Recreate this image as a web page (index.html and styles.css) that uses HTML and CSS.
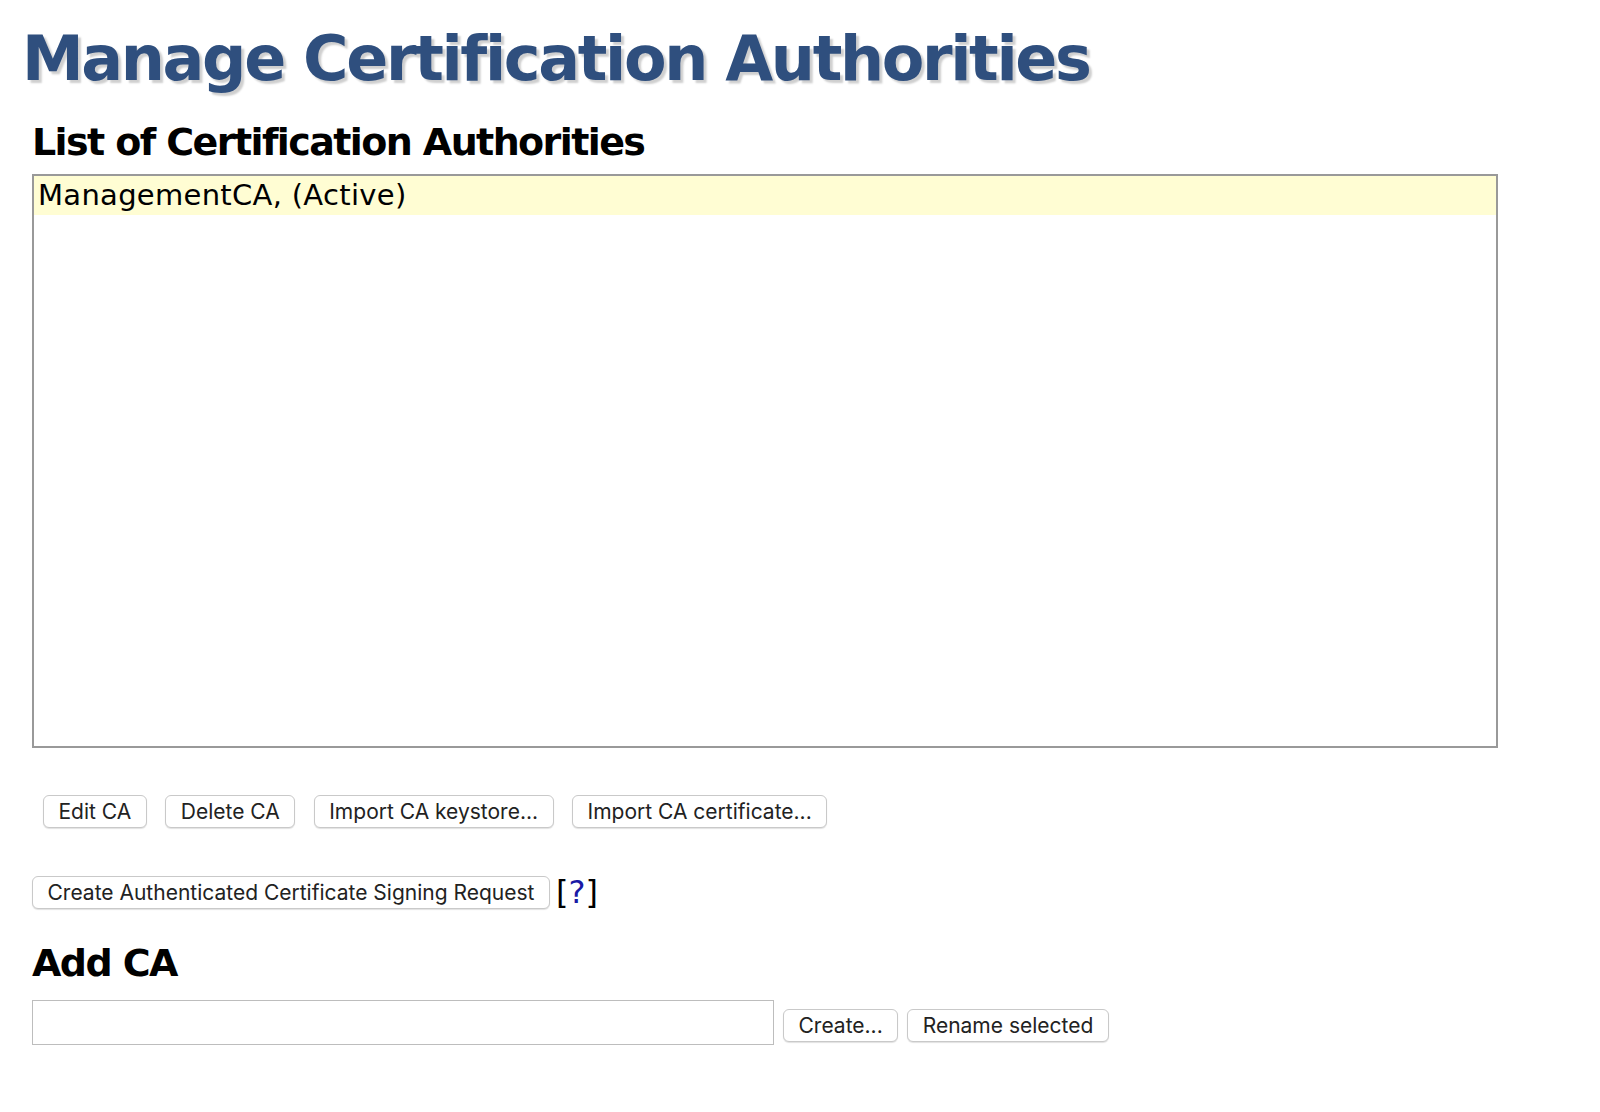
FILE: index.html
```html
<!DOCTYPE html>
<html>
<head>
<meta charset="utf-8">
<title>Manage Certification Authorities</title>
<link rel="stylesheet" href="styles.css">
</head>
<body>
<h1 class="title">Manage Certification Authorities</h1>
<div class="content">
  <h2 class="section">List of Certification Authorities</h2>
  <div class="listbox">
    <div class="option selected">ManagementCA, (Active)</div>
  </div>
  <div class="btn-row">
    <button class="btn">Edit CA</button>
    <button class="btn">Delete CA</button>
    <button class="btn">Import CA keystore...</button>
    <button class="btn">Import CA certificate...</button>
  </div>
  <div class="csr-row">
    <button class="btn">Create Authenticated Certificate Signing Request</button>
    <span class="help">[<a class="help-link">?</a>]</span>
  </div>
  <h2 class="section add">Add CA</h2>
  <div class="add-row">
    <input class="ca-name" type="text">
    <button class="btn">Create...</button>
    <button class="btn">Rename selected</button>
  </div>
</div>
</body>
</html>
```

FILE: styles.css
```css
html, body {
  margin: 0;
  padding: 0;
  background: #ffffff;
}
body {
  font-family: "DejaVu Sans", Verdana, sans-serif;
  color: #000;
}
.title {
  margin: 0;
  padding: 28px 0 0 22px;
  font-size: 62px;
  line-height: 1;
  font-weight: bold;
  letter-spacing: -2.35px;
  color: #2f4f7e;
  text-shadow: 3px 3px 2px #cfcfcf;
}
.content {
  padding-left: 32px;
}
.section {
  margin: 33px 0 0 0;
  font-size: 38px;
  line-height: 1;
  font-weight: bold;
  letter-spacing: -1.6px;
}
.listbox {
  margin-top: 13px;
  width: 1462px;
  height: 570px;
  border: 2px solid #999999;
  background: #fff;
}
.option {
  font-size: 29px;
  line-height: 39px;
  letter-spacing: 0.3px;
  padding-left: 4px;
}
.option.selected {
  background: #fffdd3;
}
.btn-row {
  margin-top: 47px;
  padding-left: 11px;
  display: flex;
  gap: 18.5px;
}
.btn {
  font-family: Inter, "Liberation Sans", sans-serif;
  font-size: 21px;
  height: 33px;
  padding: 0 14.5px;
  background: #fff;
  color: #222;
  border: 1px solid #c9c9c9;
  border-radius: 6px;
  box-shadow: 0 1px 1px rgba(0,0,0,0.12);
}
.csr-row {
  margin-top: 48px;
  height: 33px;
  display: flex;
  align-items: center;
  gap: 6px;
}
.help {
  font-size: 32px;
  line-height: 33px;
  color: #000;
}
.help-link {
  color: #1a1aa6;
}
.section.add {
  margin-top: 35px;
}
.add-row {
  margin-top: 18px;
  display: flex;
  align-items: flex-end;
  gap: 9px;
}
.ca-name {
  box-sizing: border-box;
  width: 742px;
  height: 45px;
  border: 1px solid #bdbdbd;
  margin: 0;
}
.add-row .btn {
  margin-bottom: 3px;
}
```
